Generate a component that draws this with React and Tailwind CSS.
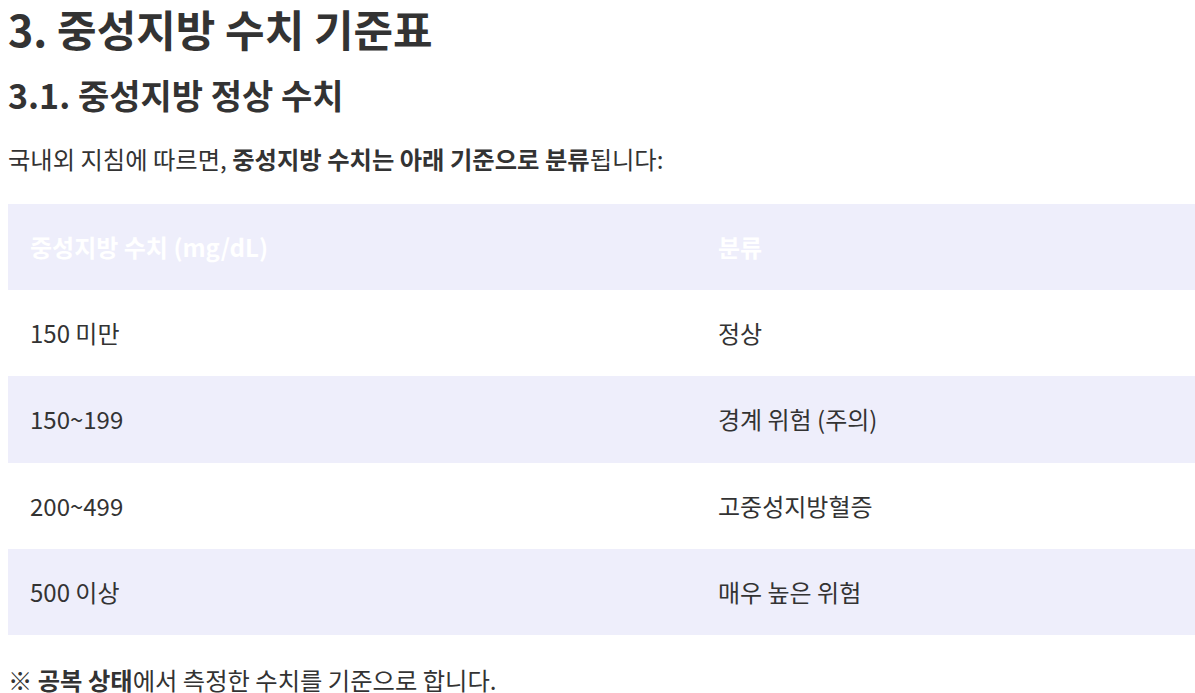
const rows = [
  { value: "150 미만", label: "정상" },
  { value: "150~199", label: "경계 위험 (주의)" },
  { value: "200~499", label: "고중성지방혈증" },
  { value: "500 이상", label: "매우 높은 위험" },
];

export default function App() {
  return (
    <div className="min-h-screen bg-white pl-2 pt-[2px] text-[#333333] font-['Noto_Sans_CJK_KR','Noto_Sans',sans-serif]">
      <h2 className="text-[43px] font-bold leading-[52px]">3. 중성지방 수치 기준표</h2>
      <h3 className="mt-[21px] text-[34px] font-bold leading-[40px]">3.1. 중성지방 정상 수치</h3>

      <p className="mt-[27px] text-[24.3px] leading-[33px]">
        국내외 지침에 따르면, <strong className="font-bold">중성지방 수치는 아래 기준으로 분류</strong>됩니다:
      </p>

      {/* 기준표 */}
      <div className="mt-[29px] flex flex-col text-[24px]">
        <div className="flex h-[86.2px] items-center bg-[#eeeefb] font-bold text-white">
          <div className="w-[688px] pl-[22px]">중성지방 수치 (mg/dL)</div>
          <div className="flex-1 pl-[22px]">분류</div>
        </div>
        {rows.map((row, i) => (
          <div
            key={row.value}
            className={i % 2 === 1 ? "flex h-[86.2px] items-center bg-[#eeeefb]" : "flex h-[86.2px] items-center bg-white"}
          >
            <div className="w-[688px] pl-[22px]">{row.value}</div>
            <div className="flex-1 pl-[22px]">{row.label}</div>
          </div>
        ))}
      </div>

      <p className="mt-[33px] text-[24.3px] leading-[24px]">
        ※ <strong className="font-bold">공복 상태</strong>에서 측정한 수치를 기준으로 합니다.
      </p>
    </div>
  );
}
